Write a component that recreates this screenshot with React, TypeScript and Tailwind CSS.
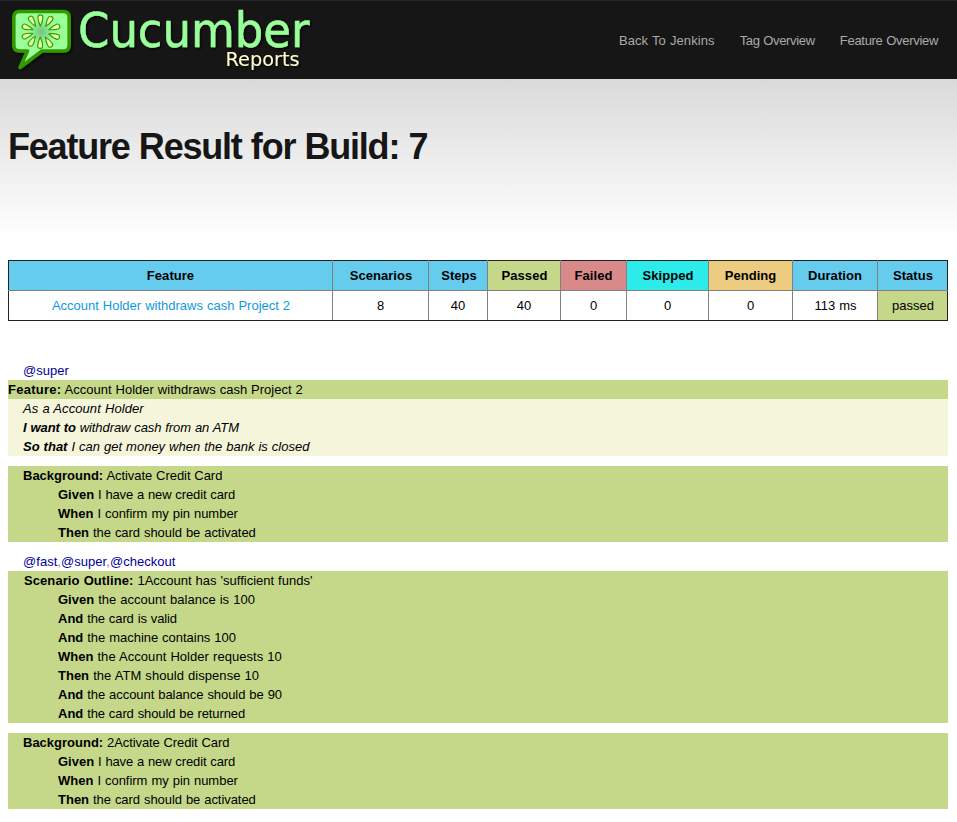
import React from 'react';

type Line = { kw: string; text: string; kwClass?: string; spacing?: string };

const petals = [
  [40.4, 20.3, 0], [48.9, 21.3, 32], [54.6, 27.6, 70], [54.4, 35.8, 110], [48.6, 42.2, 148],
  [40.2, 43, 180], [32.2, 41.2, 212], [27.4, 35.5, 250], [27.4, 27.6, 290], [32.4, 21.2, 328],
];

function Logo() {
  return (
    <svg className="block h-[79px] w-[320px] shrink-0 overflow-visible" viewBox="0 0 320 79">
      <defs>
        <filter id="shade" x="-10%" y="-10%" width="130%" height="130%">
          <feDropShadow dx="1.5" dy="1.5" stdDeviation="1.2" floodColor="#000" floodOpacity="0.8" />
        </filter>
        <radialGradient id="core">
          <stop offset="0" stopColor="#70c47f" />
          <stop offset="1" stopColor="#99ff99" />
        </radialGradient>
      </defs>
      <g filter="url(#shade)">
        <path
          d="M19.500 11.500H63.500Q69.200 11.500 69.200 17.500V45Q69.200 51 63.500 51H42L20 67.500L27.500 51H19.500Q13.800 51 13.800 45V17.500Q13.800 11.500 19.500 11.500Z"
          fill="#99ff99" stroke="#339900" strokeWidth="3.600" strokeLinejoin="round"
        />
        <circle cx="41.300" cy="31.700" r="13" fill="url(#core)" />
        {petals.map(([x, y, a]) => (
          <path
            key={a}
            d="M0 6C-1.400 3-2.500 0-2.500-2.900A2.500 2.500 0 0 1 2.500-2.900C2.500 0 1.400 3 0 6Z"
            transform={`translate(${x} ${y}) rotate(${a})`}
            fill="#e4ff9c" stroke="#339900" strokeWidth="1.100" strokeLinejoin="round"
          />
        ))}
      </g>
      <g filter="url(#shade)" fontFamily="'DejaVu Sans', 'Noto Sans', sans-serif">
        <text x="78" y="46.500" fontSize="48" fill="#99ff99" stroke="#99ff99" strokeWidth="0.500" textLength="231.500" lengthAdjust="spacingAndGlyphs">Cucumber</text>
        <text x="225.500" y="65.500" fontSize="19" fill="#ffffcc" textLength="74" lengthAdjust="spacingAndGlyphs">Reports</text>
      </g>
    </svg>
  );
}

const columns = [
  { name: 'Feature', value: 'Account Holder withdraws cash Project 2', head: 'w-[324px] bg-[#66ccee]', cell: 'text-[#1199dd] pl-px' },
  { name: 'Scenarios', value: '8', head: 'w-[96px] bg-[#66ccee] pl-px', cell: '' },
  { name: 'Steps', value: '40', head: 'w-[59px] bg-[#66ccee] pl-[2px]', cell: '' },
  { name: 'Passed', value: '40', head: 'w-[73px] bg-[#c5d88a] pl-px', cell: '' },
  { name: 'Failed', value: '0', head: 'w-[66px] bg-[#d88a8a]', cell: '' },
  { name: 'Skipped', value: '0', head: 'w-[82px] bg-[#2debeb] pl-px', cell: '' },
  { name: 'Pending', value: '0', head: 'w-[84px] bg-[#ebcc81]', cell: '' },
  { name: 'Duration', value: '113 ms', head: 'w-[85px] bg-[#66ccee]', cell: 'pl-px' },
  { name: 'Status', value: 'passed', head: 'w-[70px] bg-[#66ccee] pl-px', cell: 'bg-[#c5d88a] pl-px' },
];

function Results() {
  return (
    <table className="h-[61px] w-[940px] table-fixed border-collapse border border-[#222] text-center">
      <thead>
        <tr className="h-[30px]">
          {columns.map((c) => (
            <th key={c.name} className={`border border-x-[#808080] border-t-[#222] border-b-[#808080] py-0 pr-0 first:border-l-[#222] last:border-r-[#222] tracking-[0.05px] ${c.head}`}>{c.name}</th>
          ))}
        </tr>
      </thead>
      <tbody>
        <tr className="h-[30px]">
          {columns.map((c) => (
            <td key={c.name} className={`border border-x-[#808080] border-t-[#808080] border-b-[#222] py-0 pr-0 first:border-l-[#222] last:border-r-[#222] ${c.cell}`}>{c.value}</td>
          ))}
        </tr>
      </tbody>
    </table>
  );
}

function Block({ title, steps }: { title: Line; steps: Line[] }) {
  return (
    <section className="bg-[#c5d88a]">
      <p className={`pl-[15px] ${title.spacing ?? ''}`}><b className={title.kwClass}>{title.kw}</b> {title.text}</p>
      {steps.map((s) => (
        <p key={s.text} className={`pl-[50px] ${s.spacing ?? ''}`}><b className="tracking-normal">{s.kw}</b> {s.text}</p>
      ))}
    </section>
  );
}

const cardSteps: Line[] = [
  { kw: 'Given', text: 'I have a new credit card', spacing: 'tracking-[-0.12px]' },
  { kw: 'When', text: 'I confirm my pin number', spacing: 'tracking-[-0.02px]' },
  { kw: 'Then', text: 'the card should be activated', spacing: 'tracking-[-0.05px]' },
];

const outlineSteps: Line[] = [
  { kw: 'Given', text: 'the account balance is 100', spacing: 'tracking-[0.02px]' },
  { kw: 'And', text: 'the card is valid', spacing: 'tracking-[-0.1px]' },
  { kw: 'And', text: 'the machine contains 100', spacing: 'tracking-[-0.03px]' },
  { kw: 'When', text: 'the Account Holder requests 10', spacing: 'tracking-[0.05px]' },
  { kw: 'Then', text: 'the ATM should dispense 10', spacing: 'tracking-[0.05px]' },
  { kw: 'And', text: 'the account balance should be 90', spacing: 'tracking-[-0.05px]' },
  { kw: 'And', text: 'the card should be returned', spacing: 'tracking-[-0.1px]' },
];

export default function App() {
  return (
    <div className="h-[822px] overflow-hidden bg-white font-['Liberation_Sans',Arial,sans-serif] text-[13px] leading-[19px] [word-spacing:0.39px] whitespace-nowrap text-black">
      <header className="flex h-[79px] justify-between border-t border-[#252525] bg-[#161616]">
        <div className="-mt-px"><Logo /></div>
        <nav className="flex gap-[25px] pt-[30px] pr-[19px] text-[#aaaaaa]">
          <a className="tracking-[0.08px]">Back To Jenkins</a>
          <a className="tracking-[-0.33px]">Tag Overview</a>
          <a className="tracking-[-0.3px]">Feature Overview</a>
        </nav>
      </header>
      <main>
        <div className="h-[181px] bg-linear-to-b from-[#dadada] to-white to-[160px] px-2 pt-[45px]">
          <h1 className="text-[36px] leading-[46px] font-bold tracking-[-1.2px] text-[#161616]">Feature Result for Build: 7</h1>
        </div>
        <div className="pr-[9px] pl-2">
          <Results />
          <div className="pt-[40px]">
            <p className="pl-[15px] text-[#000099]">@super</p>
            <p className="bg-[#c5d88a]"><b className="tracking-[0.25px]">Feature:</b> Account Holder withdraws cash Project 2</p>
            <div className="mb-[10px] bg-[#f5f5dc] pl-[15px] italic">
              <p className="tracking-[0.08px]">As a Account Holder</p>
              <p className="tracking-[-0.08px]"><b>I want to</b> withdraw cash from an ATM</p>
              <p><b>So that</b> I can get money when the bank is closed</p>
            </div>
            <Block title={{ kw: 'Background:', text: 'Activate Credit Card', spacing: 'tracking-[-0.06px]', kwClass: 'tracking-normal' }} steps={cardSteps} />
            <p className="mt-[10px] pl-[15px] tracking-[0.04px] text-[#000099]">@fast<span className="text-[#888]">,</span>@super<span className="text-[#888]">,</span>@checkout</p>
            <Block title={{ kw: 'Scenario Outline:', text: "1Account has 'sufficient funds'", kwClass: 'ml-px tracking-[0.08px]' }} steps={outlineSteps} />
            <div className="h-[10px]" />
            <Block title={{ kw: 'Background:', text: '2Activate Credit Card', spacing: 'tracking-[-0.1px]', kwClass: 'tracking-normal' }} steps={cardSteps} />
          </div>
        </div>
      </main>
    </div>
  );
}
